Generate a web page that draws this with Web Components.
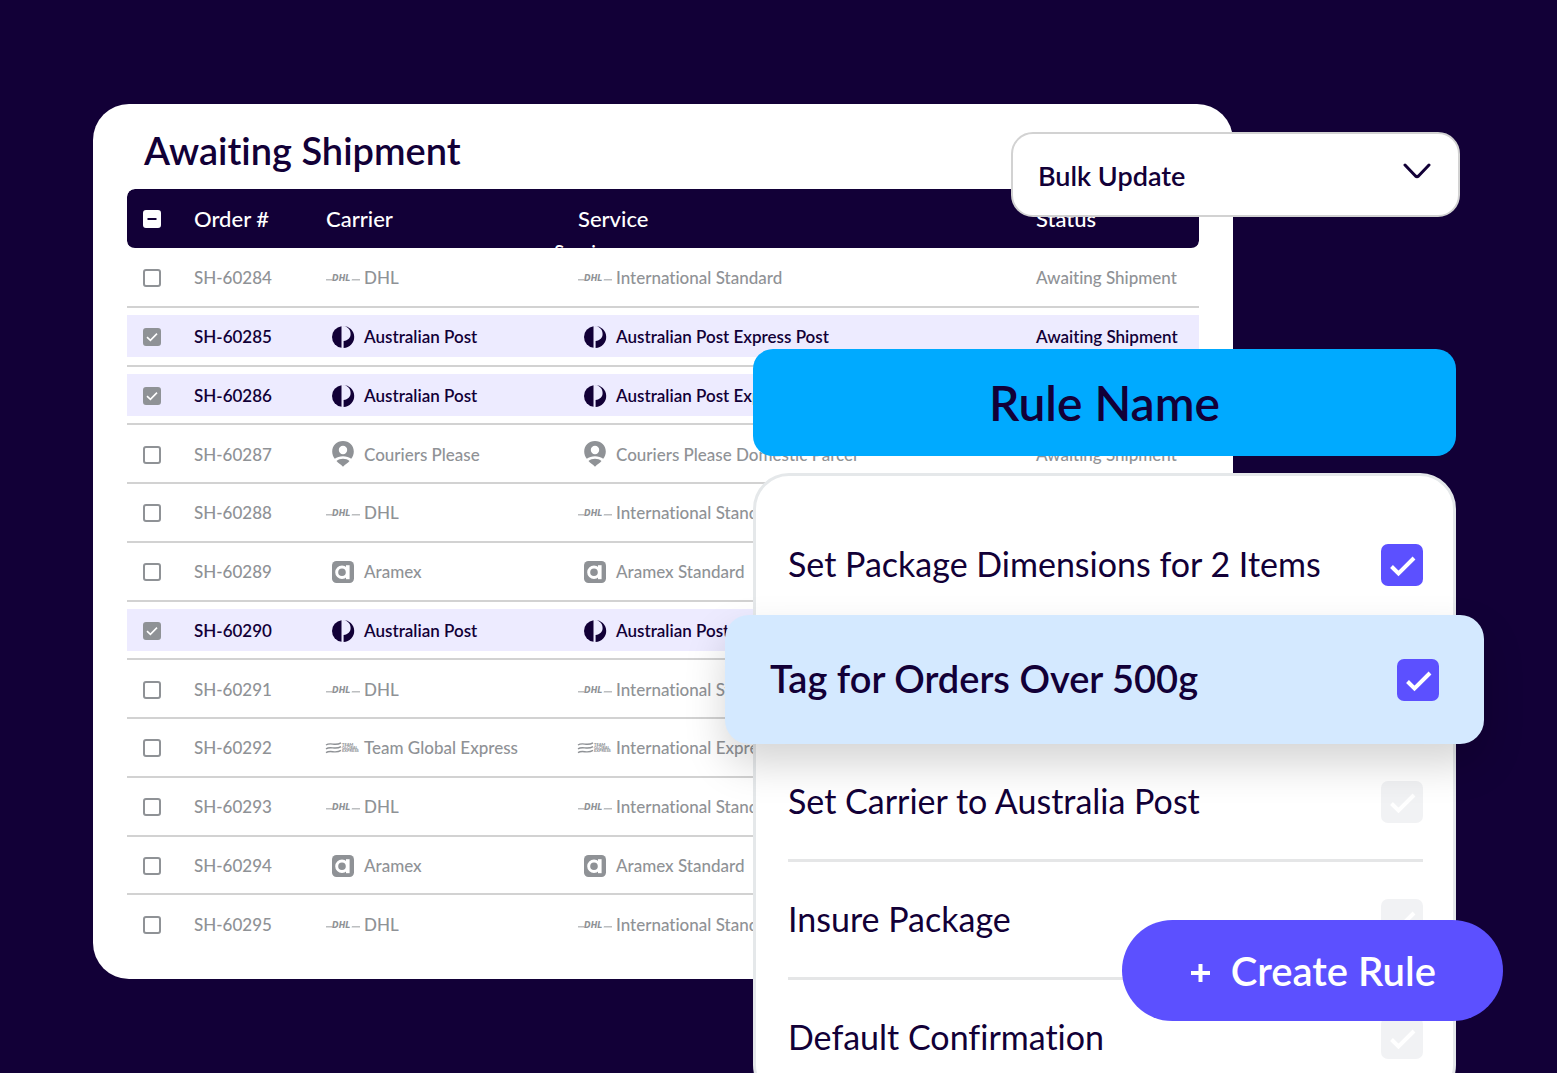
<!DOCTYPE html>
<html lang="en">
<head>
<meta charset="utf-8">
<meta name="viewport" content="width=device-width, initial-scale=1">
<title>Awaiting Shipment</title>
<style>
  html, body {
    margin: 0;
    height: 100%;
  }

  body {
    --ink: #120037;
    --accent: #5c50ff;
    --muted: #8f9296;
    --line: #d2d2d2;
    background: var(--ink);
    color: var(--ink);
    font-family: Lato, "Open Sans", sans-serif;
    font-weight: 500;
    font-variant-ligatures: none;
  }
</style>
</head>
<body>
<shipping-app></shipping-app>

<script>
const ORDERS = [
  { id: 'SH-60284', logo: 'dhl', carrier: 'DHL', service: 'International Standard' },
  { id: 'SH-60285', logo: 'auspost', carrier: 'Australian Post', service: 'Australian Post Express Post', selected: true },
  { id: 'SH-60286', logo: 'auspost', carrier: 'Australian Post', service: 'Australian Post Express Post', selected: true },
  { id: 'SH-60287', logo: 'couriers', carrier: 'Couriers Please', service: 'Couriers Please Domestic Parcel' },
  { id: 'SH-60288', logo: 'dhl', carrier: 'DHL', service: 'International Standard' },
  { id: 'SH-60289', logo: 'aramex', carrier: 'Aramex', service: 'Aramex Standard' },
  { id: 'SH-60290', logo: 'auspost', carrier: 'Australian Post', service: 'Australian Post Express Post', selected: true },
  { id: 'SH-60291', logo: 'dhl', carrier: 'DHL', service: 'International Standard' },
  { id: 'SH-60292', logo: 'tge', carrier: 'Team Global Express', service: 'International Express' },
  { id: 'SH-60293', logo: 'dhl', carrier: 'DHL', service: 'International Standard' },
  { id: 'SH-60294', logo: 'aramex', carrier: 'Aramex', service: 'Aramex Standard' },
  { id: 'SH-60295', logo: 'dhl', carrier: 'DHL', service: 'International Standard' }
];

const LOGOS = {
  dhl: `
    <path d="M0 16h6.500l-.5 1.500H0zM26 16H34v1.500h-8.500z" opacity=".6"/>
    <text x="6" y="17.800" font-family="DejaVu Sans" font-size="8" font-weight="700" font-style="italic">DHL</text>`,
  auspost: `
    <path d="M15.500 4.300v21.400A10.800 10.800 0 0 1 6 15a10.800 10.800 0 0 1 9.500-10.700z"/>
    <path d="M17 4.100A10.900 10.900 0 1 1 17.600 25.900V18.900c4.300-.3 7-3 7-6.900 0-4.500-3.200-7.500-7.600-7.900z"/>`,
  couriers: `
    <path fill-rule="evenodd" d="M17 1C10.800 1 6.200 5.600 6.200 11.500c0 3 1 5.300 2.600 7.300 2-1.700 5-2.600 8.200-2.600s6.200.9 8.200 2.600c1.600-2 2.600-4.300 2.600-7.300C27.800 5.600 23.200 1 17 1zm0 4.800a4.200 4.200 0 1 1 0 8.400 4.200 4.200 0 0 1 0-8.400z"/>
    <path d="M10.500 21c1.800-1.600 4-2.300 6.500-2.300s4.700.7 6.500 2.300c-1.700 2-4.200 3.200-6.500 5.800-2.300-2.600-4.800-3.800-6.500-5.800z"/>`,
  aramex: `
    <rect x="6" y="4" width="22" height="22" rx="4.500"/>
    <circle cx="16" cy="15.200" r="5.300" fill="none" stroke="#fff" stroke-width="3"/>
    <path d="M20 8.200h3.600v14H20z" fill="#fff"/>`,
  tge: `
    <path d="M0 12c5-3.200 9 1.600 15-2.200M0 15.800c5-3.200 9 1.600 15-2.200M0 19.600c5-3.200 9 1.600 15-2.200" fill="none" stroke="currentColor" stroke-width="1.400"/>
    <g font-size="4" font-weight="900"><text x="16" y="12.800">TEAM</text><text x="16" y="16">GLOBAL</text><text x="16" y="19.200">EXPRESS</text></g>`
};

class CarrierLogo extends HTMLElement {
  constructor() {
    super();
    this.attachShadow({ mode: 'open' });
  }

  connectedCallback() {
    this.shadowRoot.innerHTML = `
      <style>
        :host {
          display: block;
          flex: none;
          width: 34px;
          height: 30px;
        }

        svg {
          display: block;
          overflow: visible;
          fill: currentColor;
        }
      </style>
      <svg width="34" height="30" viewBox="0 0 34 30" aria-hidden="true">${LOGOS[this.getAttribute('name')]}</svg>
    `;
  }
}

window.customElements.define('carrier-logo', CarrierLogo);

class TickBox extends HTMLElement {
  constructor() {
    super();
    this.attachShadow({ mode: 'open' });
  }

  connectedCallback() {
    const mixed = this.hasAttribute('mixed');
    const mark = mixed ? 'M4.500 9h9' : 'M4 9.200l3.400 3.200L14 5.600';

    this.shadowRoot.innerHTML = `
      <style>
        :host {
          display: block;
          width: 18px;
          height: 18px;
        }

        label {
          display: grid;
        }

        input, svg {
          grid-area: 1 / 1;
          width: 18px;
          height: 18px;
        }

        input {
          appearance: none;
          box-sizing: border-box;
          margin: 0;
          border: 2px solid var(--muted);
          border-radius: 3px;
          background: #fff;
        }

        svg {
          display: none;
          pointer-events: none;
          fill: none;
          stroke: #fff;
          stroke-width: 1.6;
        }

        input:checked {
          background: var(--muted);
        }

        :checked + svg, :indeterminate + svg {
          display: block;
        }

        input:indeterminate {
          border-color: #fff;
        }

        :indeterminate + svg {
          stroke: var(--ink);
          stroke-width: 2;
        }
      </style>
      <label>
        <input type="checkbox" aria-label="${this.getAttribute('label')}" ${this.hasAttribute('checked') ? 'checked' : ''}>
        <svg viewBox="0 0 18 18" aria-hidden="true"><path d="${mark}"/></svg>
      </label>
    `;
    this.shadowRoot.querySelector('input').indeterminate = mixed;
  }
}

window.customElements.define('tick-box', TickBox);

class OrderTable extends HTMLElement {
  constructor() {
    super();

    const shadowRoot = this.attachShadow({ mode: 'open' });

    shadowRoot.innerHTML = `
      <style>
        :host {
          display: block;
          box-sizing: border-box;
          padding: 22px 34px 25px;
          border-radius: 36px;
          background: #fff;
        }

        h1 {
          margin: 0 0 15px 17px;
          font-size: 38px;
          font-weight: 600;
          line-height: 48px;
        }

        table {
          width: 100%;
          height: 765px;
          table-layout: fixed;
          border-spacing: 0;
          font-size: 17px;
          line-height: 24px;
          white-space: nowrap;
        }

        th, td {
          padding: 0;
          text-align: left;
          font-weight: 500;
        }

        th:first-child, td:first-child {
          padding-left: 16px;
        }

        th {
          position: relative;
          height: 59px;
          border-bottom: 1px solid transparent;
          background: var(--ink) padding-box;
          color: #fff;
          font-size: 22px;
          font-weight: 500;
        }

        th:first-child {
          border-radius: 8px 0 0 8px;
        }

        th:last-child {
          border-radius: 0 8px 8px 0;
        }

        .check { width: 51px; }
        .order { width: 132px; }
        .carrier { width: 252px; }
        .status { width: 163px; }

        /* second heading line, cut off by the bar's lower edge */
        .overflow {
          position: absolute;
          left: -24px;
          bottom: 0;
          height: 8px;
          overflow: hidden;
          font-size: 19px;
        }

        td {
          height: 54px;
          padding-top: 2px;
          border-bottom: 2px solid var(--line);
          color: var(--muted);
        }

        tr:last-child td {
          border-bottom-color: transparent;
        }

        .selected td {
          background: linear-gradient(#edebff, #edebff) center / 100% 42px no-repeat;
          color: var(--ink);
          font-weight: 600;
        }

        .with-logo {
          display: flex;
          align-items: center;
          gap: 4px;
        }
      </style>

      <h1>Awaiting Shipment</h1>
      <table>
        <thead>
          <tr>
            <th class="check"><tick-box mixed label="Select all orders"></tick-box></th>
            <th class="order">Order #</th>
            <th class="carrier">Carrier</th>
            <th>Service<span class="overflow" aria-hidden="true">Service</span></th>
            <th class="status">Status</th>
          </tr>
        </thead>
        <tbody></tbody>
      </table>
    `;
  }

  connectedCallback() {
    this.shadowRoot.querySelector('tbody').innerHTML = ORDERS.map(order => `
      <tr class="${order.selected ? 'selected' : ''}">
        <td><tick-box label="${order.id}" ${order.selected ? 'checked' : ''}></tick-box></td>
        <td>${order.id}</td>
        <td><div class="with-logo"><carrier-logo name="${order.logo}"></carrier-logo>${order.carrier}</div></td>
        <td><div class="with-logo"><carrier-logo name="${order.logo}"></carrier-logo>${order.service}</div></td>
        <td>Awaiting Shipment</td>
      </tr>
    `).join('');
  }
}

window.customElements.define('order-table', OrderTable);

class BulkSelect extends HTMLElement {
  constructor() {
    super();

    this.attachShadow({ mode: 'open' }).innerHTML = `
      <style>
        :host {
          display: grid;
        }

        select, svg {
          grid-area: 1 / 1;
        }

        select {
          appearance: none;
          box-sizing: border-box;
          width: 100%;
          height: 85px;
          padding: 3px 60px 0 25px;
          border: 2px solid var(--line);
          border-radius: 22px;
          background: #fff;
          color: var(--ink);
          font: 600 27px/36px Lato, "Open Sans", sans-serif;
        }

        svg {
          place-self: center end;
          margin: 0 29px 8px 0;
          pointer-events: none;
          fill: none;
          stroke: var(--ink);
          stroke-width: 3;
          stroke-linecap: round;
          stroke-linejoin: round;
        }
      </style>
      <select aria-label="Bulk action"><option>Bulk Update</option></select>
      <svg width="28" height="16" viewBox="0 0 28 16" aria-hidden="true"><path d="M2 2l10.500 11q1.500 1.300 3 0L26 2"/></svg>
    `;
  }
}

window.customElements.define('bulk-select', BulkSelect);

class RuleItem extends HTMLElement {
  constructor() {
    super();
    this.attachShadow({ mode: 'open' });
  }

  connectedCallback() {
    this.shadowRoot.innerHTML = `
      <style>
        :host {
          display: block;
          border-bottom: 3px solid #e5e6e7;
          font-size: 34px;
          font-weight: 400;
        }

        :host([active]) {
          position: relative;
          z-index: 1;
          margin: -10px -61px 0 -63px;
          padding: 0 45px;
          border: 0;
          border-radius: 24px;
          background: #d4e9ff;
          box-shadow: 0 20px 40px rgba(0, 0, 0, .17);
          font-size: 38px;
          font-weight: 600;
        }

        label {
          display: flex;
          align-items: center;
          justify-content: space-between;
          height: 115px;
          white-space: nowrap;
        }

        :host([active]) label {
          height: 129px;
        }

        .text {
          padding-bottom: 3px;
        }

        .box {
          display: grid;
        }

        input, svg {
          grid-area: 1 / 1;
          width: 42px;
          height: 42px;
        }

        input {
          appearance: none;
          margin: 0;
          border-radius: 7px;
          background: #f1f2f4;
        }

        input:checked {
          background: var(--accent);
        }

        svg {
          pointer-events: none;
          fill: none;
          stroke: #fff;
          stroke-width: 4;
        }
      </style>
      <label>
        <span class="text"><slot></slot></span>
        <span class="box">
          <input type="checkbox" ${this.hasAttribute('checked') ? 'checked' : ''}>
          <svg viewBox="0 0 42 42" aria-hidden="true"><path d="M10.500 22.500l7 7L33 14"/></svg>
        </span>
      </label>
    `;
  }
}

window.customElements.define('rule-item', RuleItem);

class RuleBuilder extends HTMLElement {
  constructor() {
    super();

    this.attachShadow({ mode: 'open' }).innerHTML = `
      <style>
        :host {
          display: flex;
          flex-direction: column;
          gap: 17px;
        }

        h2 {
          margin: 0;
          padding: 24px;
          border-radius: 20px;
          background: #00aaff;
          font-size: 48px;
          font-weight: 600;
          line-height: 59px;
          text-align: center;
        }

        .rules {
          padding: 31px 30px 0 32px;
          border: 3px solid #e5e8ea;
          border-radius: 36px;
          background: #fff;
        }
      </style>
      <h2><slot name="title"></slot></h2>
      <div class="rules"><slot></slot></div>
    `;
  }
}

window.customElements.define('rule-builder', RuleBuilder);

class CreateButton extends HTMLElement {
  constructor() {
    super();

    this.attachShadow({ mode: 'open' }).innerHTML = `
      <style>
        :host {
          display: block;
        }

        button {
          display: flex;
          align-items: center;
          gap: 20px;
          height: 101px;
          padding: 0 67px;
          border: 0;
          border-radius: 51px;
          background: var(--accent);
          color: #fff;
          font: 600 40px/48px Lato, "Open Sans", sans-serif;
        }

        svg {
          margin-top: 4px;
          stroke: #fff;
          stroke-width: 4;
        }
      </style>
      <button type="button">
        <svg width="22" height="20" viewBox="0 0 22 20" aria-hidden="true"><path d="M2 10h19M11.500 1v18"/></svg>
        <slot></slot>
      </button>
    `;
  }
}

window.customElements.define('create-button', CreateButton);

class ShippingApp extends HTMLElement {
  constructor() {
    super();

    this.attachShadow({ mode: 'open' }).innerHTML = `
      <style>
        :host {
          display: block;
        }

        main {
          position: relative;
          display: grid;
          grid-template-columns: 660fr 480fr 223px;
          align-items: start;
          box-sizing: border-box;
          height: 100vh;
          padding: 104px 101px 0 93px;
          overflow: hidden;
        }

        order-table {
          grid-area: 1 / 1 / 2 / 3;
        }

        bulk-select {
          grid-area: 1 / 2 / 2 / 4;
          z-index: 1;
          justify-self: end;
          width: 449px;
          margin: 28px -4px 0 0;
        }

        rule-builder {
          grid-area: 1 / 2 / 2 / 4;
          z-index: 1;
          margin-top: 245px;
        }

        create-button {
          position: absolute;
          right: 54px;
          bottom: 52px;
          z-index: 2;
        }
      </style>
      <main>
        <order-table></order-table>
        <bulk-select></bulk-select>
        <rule-builder>
          <span slot="title">Rule Name</span>
          <rule-item checked>Set Package Dimensions for 2 Items</rule-item>
          <rule-item active checked>Tag for Orders Over 500g</rule-item>
          <rule-item>Set Carrier to Australia Post</rule-item>
          <rule-item>Insure Package</rule-item>
          <rule-item>Default Confirmation</rule-item>
        </rule-builder>
        <create-button>Create Rule</create-button>
      </main>
    `;
  }
}

window.customElements.define('shipping-app', ShippingApp);
</script>
</body>
</html>
